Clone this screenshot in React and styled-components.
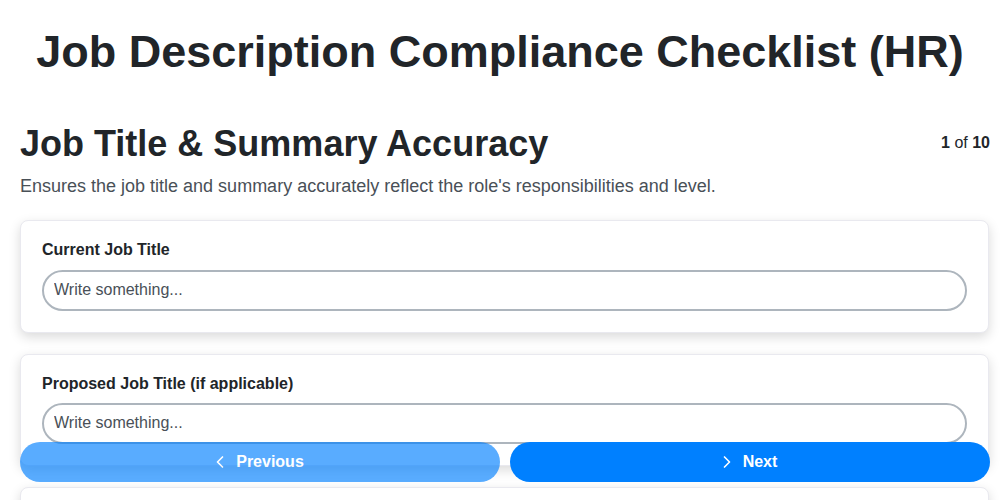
import React from 'react';
import styled, { createGlobalStyle } from 'styled-components';
import { ChevronLeft, ChevronRight } from 'lucide-react';

const fields = [
    { id: 'current', label: 'Current Job Title' },
    { id: 'proposed', label: 'Proposed Job Title (if applicable)' },
    { id: 'summary', label: 'Job Summary Reflects Core Responsibilities?' },
    { id: 'level', label: 'Level / Grade Alignment Notes' },
];

const App = () => {
    const [values, setValues] = React.useState({});

    return (
        <>
            <GlobalStyle />
            <Title>Job Description Compliance Checklist (HR)</Title>
            <Section>
                <SectionHeader>
                    <SectionTitle>Job Title &amp; Summary Accuracy</SectionTitle>
                    <Counter>
                        <b>1</b> of <b>10</b>
                    </Counter>
                </SectionHeader>
                <Description>
                    Ensures the job title and summary accurately reflect the role's responsibilities and level.
                </Description>
                <CardList>
                    {fields.map((field) => (
                        <Card key={field.id}>
                            <Label htmlFor={field.id}>{field.label}</Label>
                            <Input
                                id={field.id}
                                type='text'
                                placeholder='Write something...'
                                value={values[field.id] || ''}
                                onChange={(ev) =>
                                    setValues({ ...values, [field.id]: ev.target.value })
                                }
                            />
                        </Card>
                    ))}
                </CardList>
            </Section>
            <Footer>
                <NavButton disabled>
                    <ChevronLeft size={20} strokeWidth={2} />
                    Previous
                </NavButton>
                <NavButton>
                    <ChevronRight size={20} strokeWidth={2} />
                    Next
                </NavButton>
            </Footer>
        </>
    );
};

const GlobalStyle = createGlobalStyle`
    body {
        margin: 0;
        background: #fff;
        color: #212529;
        font-family: "Liberation Sans", Arial, sans-serif;
    }
    * {
        box-sizing: border-box;
    }
`;

const Title = styled.h1`
    margin: 0;
    padding: 25px 20px 43px;
    text-align: center;
    font-size: 45px;
    line-height: 1.2;
    font-weight: 700;
    color: #212529;
`;

const Section = styled.main`
    padding: 0 11px 80px 20px;
`;

const SectionHeader = styled.div`
    display: flex;
    justify-content: space-between;
    align-items: flex-start;
`;

const SectionTitle = styled.h2`
    margin: 0;
    font-size: 36px;
    line-height: 1.2;
    font-weight: 700;
    color: #212529;
`;

const Counter = styled.span`
    padding-top: 12px;
    margin-right: -1px;
    font-size: 16px;
    color: #212529;
`;

const Description = styled.p`
    margin: 9px 0 21px;
    font-size: 18px;
    line-height: 1.4;
    color: #495057;
`;

const CardList = styled.div`
    display: flex;
    flex-direction: column;
    gap: 21px;
`;

const Card = styled.div`
    display: flex;
    flex-direction: column;
    padding: 19px 21px 21px;
    background: #fff;
    border: 1px solid #e9e9ef;
    border-radius: 8px;
    box-shadow: 0 4px 12px rgba(0, 0, 0, 0.15);
`;

const Label = styled.label`
    margin-bottom: 10px;
    font-size: 16px;
    line-height: 1.2;
    font-weight: 700;
    color: #212529;
`;

const Input = styled.input`
    height: 41px;
    padding: 0 10px;
    border: 2px solid #adb5bd;
    border-radius: 21px;
    outline: none;
    font-family: inherit;
    font-size: 16px;
    color: #212529;
    background: #fff;

    &::placeholder {
        color: #495057;
    }
`;

const Footer = styled.div`
    position: fixed;
    left: 20px;
    right: 10px;
    bottom: 18px;
    display: grid;
    grid-template-columns: 1fr 1fr;
    gap: 10px;
`;

const NavButton = styled.button`
    display: flex;
    align-items: center;
    justify-content: center;
    gap: 6px;
    height: 40px;
    padding: 0 6px 0 0;
    border: none;
    border-radius: 20px;
    background: #0080ff;
    color: #fff;
    font-family: inherit;
    font-size: 16px;
    font-weight: 700;
    cursor: pointer;

    &:disabled {
        opacity: 0.65;
        cursor: default;
    }
`;

export default App;
